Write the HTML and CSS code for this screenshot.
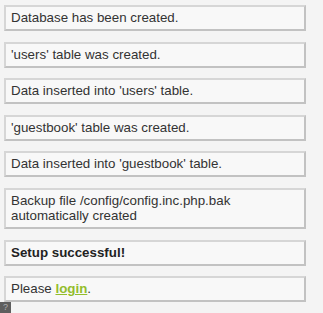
FILE: index.html
```html
<!DOCTYPE html>
<html lang="en">
<head>
    <meta charset="UTF-8">
    <title>Setup</title>
    <link rel="stylesheet" href="styles.css">
</head>
<body>

<div class="messages">
    <div class="message">Database has been created.</div>
    <div class="message">'users' table was created.</div>
    <div class="message">Data inserted into 'users' table.</div>
    <div class="message">'guestbook' table was created.</div>
    <div class="message">Data inserted into 'guestbook' table.</div>
    <div class="message">Backup file /config/config.inc.php.bak automatically created</div>
    <div class="message"><strong>Setup successful!</strong></div>
    <div class="message">Please <a href="#">login</a>.</div>
</div>

<div class="help-tab">?</div>

</body>
</html>
```

FILE: styles.css
```css
html, body {
    height: 100%;
}

body {
    font-family: "Liberation Sans", Arial, sans-serif;
    font-size: 13.33px;
    color: #333;
    margin: 0;
    padding: 5px 0 0 4px;
    background: #f4f4f4;
    box-sizing: border-box;
    position: relative;
    overflow: hidden;
}

.messages {
    width: 302px;
}

.message {
    background-color: #f8f8f8;
    border: 2px solid;
    border-color: #d6d6d6 #c2c2c2 #c2c2c2 #d6d6d6;
    padding: 3px 5px 4px 5px;
    margin-bottom: 10.6px;
}

.message strong {
    color: #222;
}

.message a {
    color: #93bd2c;
    font-weight: bold;
}

.help-tab {
    position: absolute;
    left: 0;
    bottom: 0;
    width: 11px;
    height: 11px;
    background: #5e5e5e;
    color: #b0b0b0;
    font-size: 9px;
    line-height: 11px;
    text-align: center;
}
```
